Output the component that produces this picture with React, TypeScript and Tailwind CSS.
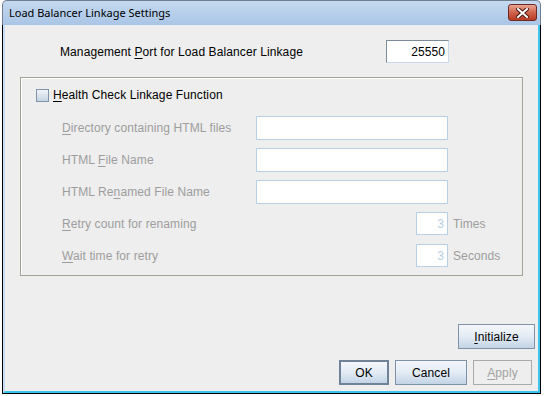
const sans = "font-['Liberation_Sans',Arial,sans-serif]";

const U = ({ children }: { children: string }) => <span className="underline underline-offset-[2px]">{children}</span>;

const FieldRow = ({ label }: { label: React.ReactNode }) => (
  <div className="flex h-[24px] items-center">
    <span className="w-[234px] whitespace-nowrap pl-[40px] text-[#9d9d9d]">{label}</span>
    <div className="h-full w-[192px] border border-[#b8cfe5] bg-white" />
  </div>
);

const SmallRow = ({ label, unit }: { label: React.ReactNode; unit: string }) => (
  <div className="flex h-[23px] items-center">
    <span className="w-[394px] whitespace-nowrap pl-[40px] text-[#9d9d9d]">{label}</span>
    <div className="flex h-full w-[32px] items-center justify-end border border-[#b8cfe5] bg-white pr-[3px] text-[#b8cfe5]">3</div>
    <span className="ml-[5px] text-[#9d9d9d]">{unit}</span>
  </div>
);

const btn =
  "flex h-[25px] items-center justify-center bg-gradient-to-b from-[#f4f7fb] via-[#e3ebf4] to-[#c3d4e6] text-black";

export default function App() {
  return (
    <div className={`h-[396px] w-[544px] bg-white text-[12px] tracking-[0.1px] ${sans}`}>
      <div className="ml-[2px] flex h-[394px] w-[539px] flex-col">
        {/* title bar */}
        <div className="flex h-[25px] items-center justify-between rounded-t-[5px] border-x border-t border-[#6f7f90] bg-gradient-to-b from-[#c5d9ef] to-[#a9c5e6] pl-[6px] pr-[3px]">
          <span className="font-['Noto_Sans',sans-serif] text-[11px] tracking-normal text-black">Load Balancer Linkage Settings</span>
          <div className="mb-[1px] flex h-[17px] w-[29px] items-center justify-center rounded-[3px] border border-[#6b2a24] bg-gradient-to-b from-[#e8a493] via-[#d0634c] to-[#b83a22]">
            <svg width="13" height="10" viewBox="0 0 13 10">
              <path d="M2 1 L11 9 M11 1 L2 9" stroke="#4a1a14" strokeWidth="4" strokeLinecap="square" />
              <path d="M2 1 L11 9 M11 1 L2 9" stroke="#ffffff" strokeWidth="2" strokeLinecap="square" />
            </svg>
          </div>
        </div>

        {/* body */}
        <div className="flex flex-1 flex-col border-x border-b border-black">
          <div className="flex flex-1 flex-col border-b-2 border-l-2 border-r-2 border-b-[#3ac4ee] border-l-[#c8ddf3] border-r-[#3ac4ee] bg-[#eeeeee]">
            <div className="mt-[15px] flex h-[23px] items-center">
              <span className="ml-[55px]">
                Management <U>P</U>ort for Load Balancer Linkage
              </span>
              <div className="ml-auto mr-[89px] flex h-full w-[63px] items-center justify-end border border-[#7d8a98] border-b-[#c9daea] border-r-[#c9daea] bg-white pr-[3px]">
                25550
              </div>
            </div>

            <div className="ml-[15px] mt-[14px] h-[199px] w-[503px] border border-[#a3a296]">
              <div className="h-full border-l border-t border-white pt-[7px]">
                <div className="flex h-[18px] items-center pl-[14px]">
                  <div className="h-[13px] w-[13px] border border-[#8094ab] bg-gradient-to-b from-[#f2f5f9] to-[#c4d3e3]" />
                  <span className="ml-[4px]">
                    <U>H</U>ealth Check Linkage Function
                  </span>
                </div>
                <div className="mt-[12px] flex flex-col gap-[8px]">
                  <FieldRow label={<><U>D</U>irectory containing HTML files</>} />
                  <FieldRow label={<>HTML <U>F</U>ile Name</>} />
                  <FieldRow label={<>HTML Re<U>n</U>amed File Name</>} />
                </div>
                <div className="mt-[8px] flex flex-col gap-[9px]">
                  <SmallRow label={<><U>R</U>etry count for renaming</>} unit="Times" />
                  <SmallRow label={<><U>W</U>ait time for retry</>} unit="Seconds" />
                </div>
              </div>
            </div>

            <div className="mr-[3px] mt-[48px] flex justify-end">
              <div className={`${btn} w-[77px] border border-[#8092a8]`}>
                <U>I</U>nitialize
              </div>
            </div>
            <div className="mr-[6px] mt-[11px] flex justify-end gap-[6px]">
              <div className={`${btn} w-[50px] border-2 border-[#6f8298]`}>OK</div>
              <div className={`${btn} w-[72px] border border-[#7d91a7]`}>Cancel</div>
              <div className="flex h-[25px] w-[59px] items-center justify-center border border-[#aaaaaa] text-[#a3a3a3]">
                <U>A</U>pply
              </div>
            </div>
          </div>
        </div>
      </div>
    </div>
  );
}
